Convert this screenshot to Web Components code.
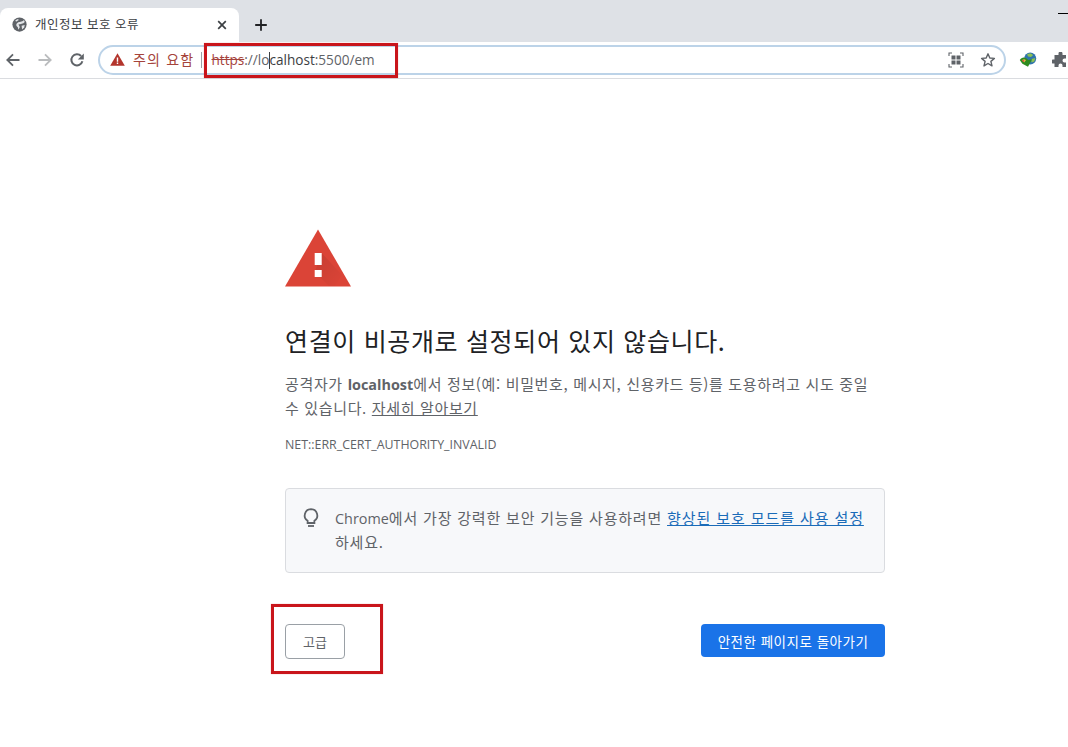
<!DOCTYPE html>
<html lang="ko"><head><meta charset="utf-8"><title>개인정보 보호 오류</title>
<style>
html,body{margin:0;padding:0;height:100%;overflow:hidden;background:#fff}
body{font-family:"Open Sans","Noto Sans CJK KR",sans-serif;width:1068px;height:747px;position:relative;display:flex;flex-direction:column}
</style></head><body>
<browser-tabstrip></browser-tabstrip>
<browser-toolbar></browser-toolbar>
<error-page></error-page>
<red-box style="left:204px;top:43px;width:194px;height:35px"></red-box>
<red-box style="left:271px;top:604px;width:112px;height:70px"></red-box>
<script>
function def(name,html){customElements.define(name,class extends HTMLElement{constructor(){super();this.attachShadow({mode:'open'}).innerHTML=html;}});}
def('red-box',`<style>:host{display:block;position:absolute;box-sizing:border-box;border:3px solid #c9151b;box-shadow:0 0 1px rgba(200,20,27,.4)}</style>`);
def('browser-tabstrip',`<style>
:host{display:flex;flex:none;height:42px;background:#dee1e6;align-items:flex-end;position:relative;font-family:"Noto Sans CJK KR","Open Sans",sans-serif}
.tab{width:239px;height:34px;box-sizing:border-box;background:#fff;border-radius:8px 8px 0 0;display:flex;align-items:center;padding:0 10px 0 12px;gap:8px}
.t{flex:1;font-size:12.5px;color:#3c4043;letter-spacing:.5px;margin-top:-3px}
.plus{width:16px;height:16px;margin:0 0 9px 14px;flex:none}
svg{display:block;flex:none}
.min{position:absolute;right:0;top:13px;width:10px;height:1px;background:#000}
</style>
<div class="tab"><svg width="15" height="15" viewBox="0 0 16 16" style="margin-top:-1px"><circle cx="8" cy="8" r="7.6" fill="#5f6368"/><path d="M12.800 3.200C10.500 5.800 7.800 4.600 5.600 6.300 3.900 7.600 4.400 9.800 6.200 10.800L6.800 13.500 8.200 11.200C8.400 9.500 7 9 7 7.800 8.800 7.300 12 7.400 13.600 5.200z" fill="#e3e5e8"/><path d="M10.200 9.200 13.600 8.600 13 11.200 10.800 13.200z" fill="#e3e5e8"/><path d="M3.600 3.400 6.400 2.200 7.200 3.300 4.300 5z" fill="#e3e5e8"/></svg><span class="t">개인정보 보호 오류</span><svg width="10" height="10" viewBox="0 0 10 10" style="margin:-1px 2px 0 0"><path d="M1.200 1.200l7.600 7.600M8.800 1.200L1.200 8.800" stroke="#3c4043" stroke-width="1.700"/></svg></div>
<svg class="plus" viewBox="0 0 16 16"><path d="M8 2.200v11.600M2.200 8h11.600" stroke="#202124" stroke-width="1.800"/></svg>
<div class="min"></div>`);
def('browser-toolbar',`<style>
:host{display:flex;flex:none;height:37px;box-sizing:border-box;background:#fff;border-bottom:1px solid #dadce0;align-items:center;padding:0 0 1px 5px;overflow:hidden}
svg{display:block;flex:none}
.omni{width:908px;height:30px;box-sizing:border-box;margin-left:13px;border:2px solid #bcd3e8;border-radius:15px;display:flex;align-items:center;padding-left:10px;font-family:"Noto Sans CJK KR","Open Sans",sans-serif}
.warn{font-size:14px;color:#a5433b;margin-left:8px;letter-spacing:1.2px;margin-top:-2px;white-space:nowrap}
.sep{width:1px;height:16px;background:#9aa0a6;margin:0 9px 0 7px}
.url{font:13.6px "Open Sans",sans-serif;color:#5f6368;flex:1;white-space:nowrap;position:relative}
.url s{color:#a5433b}
.url b{font-weight:400;color:#3c4043}
.caret{display:inline-block;width:1px;height:17px;background:#3c4043;vertical-align:-4px;margin:0 -1px 0 0}
</style>
<svg width="16" height="16" viewBox="0 0 16 16"><path d="M14.500 8H2.500M8 2.300 2.300 8 8 13.700" fill="none" stroke="#5f6368" stroke-width="1.800"/></svg>
<svg width="16" height="16" viewBox="0 0 16 16" style="margin-left:16px"><path d="M1.500 8h12M8 2.300 13.700 8 8 13.700" fill="none" stroke="#babcbe" stroke-width="1.800"/></svg>
<svg width="16" height="16" viewBox="0 0 16 16" style="margin-left:16px"><path d="M13.400 9.300A5.600 5.600 0 1 1 12.100 4" fill="none" stroke="#5f6368" stroke-width="2"/><path d="M14.800 1.400v6H8.800z" fill="#5f6368"/></svg>
<div class="omni">
<svg width="15" height="13" viewBox="0 0 15 13"><path d="M7.500.3 14.800 12.800H.2z" fill="#b3352c"/><path d="M6.800 4.500h1.400v4.200H6.800zM6.800 9.600h1.400V11H6.800z" fill="#fff"/></svg>
<span class="warn">주의 요함</span><span class="sep"></span>
<span class="url"><s>https</s>://lo<span class="caret"></span><b>calhost</b>:5500/em</span>
<svg width="16" height="16" viewBox="0 0 16 16" style="margin-right:16px"><path d="M1 4V1h3M12 1h3v3M15 12v3h-3M4 15H1v-3" fill="none" stroke="#5f6368" stroke-width="1.100"/><rect x="3.500" y="3.500" width="4" height="4" fill="#5f6368"/><rect x="8.500" y="3.500" width="4" height="4" fill="#5f6368"/><rect x="3.500" y="8.500" width="4" height="4" fill="#5f6368"/><rect x="8.500" y="8.500" width="4" height="4" fill="#5f6368"/></svg>
<svg width="16" height="16" viewBox="0 0 16 16" style="margin-right:8px"><path d="M8 1.800 9.800 6l4.600.4-3.500 3 1.100 4.500L8 11.500l-4 2.400 1.100-4.500-3.500-3L6.200 6z" fill="none" stroke="#5f6368" stroke-width="1.400" stroke-linejoin="round"/></svg>
</div>
<svg width="18" height="18" viewBox="0 0 18 18" style="margin-left:13px"><circle cx="11.200" cy="7.500" r="6" fill="#2f74ad"/><path d="M8 3.500c2-1.500 5-1 6 .8l-2 1.700-2.800-.5zM12.500 8l3.800-1-1 3.500-2.800 1z" fill="#8cc152"/><path d="M.8 9C2.500 5.500 7 5.500 9.200 9L13 8.200 9 15.800 3.400 12.800C2.500 11.500 1.800 10.500.8 9z" fill="#2e8b1f"/><path d="M3 9.300C4 7.800 6 7.800 7 9.300L5.200 11.600z" fill="#e3b341"/><path d="M3 9.300 4.500 8.500 5.200 10.500 4.200 10.900z" fill="#c8553d"/></svg>
<svg width="16" height="16" viewBox="0 0 16 16" style="margin-left:15px;flex:none"><path d="M6.500 1.500a2 2 0 0 1 4 0V3H14v3.500h-1.500a2 2 0 0 0 0 4H14V15h-3.500v-1.500a2 2 0 0 0-4 0V15H2.500v-3.500H1a2 2 0 0 1 0-4h1.500V3h4z" fill="#5f6368"/></svg>`);
def('error-page',`<style>
:host{display:block;flex:1;padding:150px 0 0 285px;font-family:"Noto Sans CJK KR","Open Sans",sans-serif;color:#5f6368;font-size:15px;box-sizing:border-box}
.w{width:600px}
svg{display:block}
h1{margin:37px 0 0;font-weight:400;font-size:25px;line-height:33px;color:#202124;letter-spacing:.66px;font-family:"Noto Sans CJK KR",sans-serif}
p{margin:15px 0 0;line-height:24px;letter-spacing:.65px;width:595px}
.lat{font-family:"Open Sans",sans-serif;letter-spacing:0;font-size:14.4px;line-height:1}
b{color:#5f6368;font-weight:700}
u{color:#5f6368}
.code{font-family:"Open Sans",sans-serif;font-size:12.4px;line-height:16px;margin-top:17px;color:#5f6368}
.box{margin-top:35px;height:85px;box-sizing:border-box;border:1px solid #dadce0;border-radius:4px;background:#f7f8fa;display:flex;padding:17px 16px 0 16px;gap:15px}
.box div{line-height:24px;letter-spacing:.8px}
.box a{color:#1a6bb8;text-decoration:underline;letter-spacing:.9px}
.btns{display:flex;justify-content:space-between;align-items:flex-start;margin-top:51px}
.adv{width:60px;height:35px;box-sizing:border-box;border:1px solid #9aa0a6;border-radius:4px;display:flex;align-items:center;justify-content:center;font-size:13px;color:#5f6368;background:#fff}
.back{width:184px;height:33px;border-radius:4px;background:#1a73e8;color:#fff;font-size:13.5px;display:flex;align-items:center;justify-content:center;letter-spacing:.5px}
</style>
<div class="w">
<svg width="66" height="58" viewBox="0 0 66 58"><defs><linearGradient id="g" x1="0" y1="0" x2="1" y2="1"><stop offset="0" stop-color="#000" stop-opacity=".16"/><stop offset="1" stop-color="#000" stop-opacity="0"/></linearGradient></defs><path d="M33 .5 66 57.500H0z" fill="#db4437"/><path d="M36.700 24 57 46 50 57H44L29.700 43z" fill="url(#g)" opacity=".6"/><path d="M29.700 24h7v12h-7zM29.700 41h7v7h-7z" fill="#fff"/></svg>
<h1>연결이 비공개로 설정되어 있지 않습니다.</h1>
<p>공격자가 <b class="lat">localhost</b>에서 정보(예: 비밀번호, 메시지, 신용카드 등)를 도용하려고 시도 중일 수 있습니다. <u>자세히 알아보기</u></p>
<div class="code">NET::ERR_CERT_AUTHORITY_INVALID</div>
<div class="box"><svg width="18" height="20" viewBox="0 0 18 20" style="flex:none;margin-top:2px"><path d="M9 1.200a6.300 6.300 0 0 0-3.400 11.600V15h6.800v-2.200A6.300 6.300 0 0 0 9 1.200z" fill="none" stroke="#5f6368" stroke-width="1.800"/><path d="M6 18h6" stroke="#5f6368" stroke-width="1.800"/></svg><div><span class="lat">Chrome</span>에서 가장 강력한 보안 기능을 사용하려면 <a>향상된 보호 모드를 사용 설정</a> 하세요.</div></div>
<div class="btns"><div class="adv">고급</div><div class="back">안전한 페이지로 돌아가기</div></div>
</div>`);
</script>
</body></html>
